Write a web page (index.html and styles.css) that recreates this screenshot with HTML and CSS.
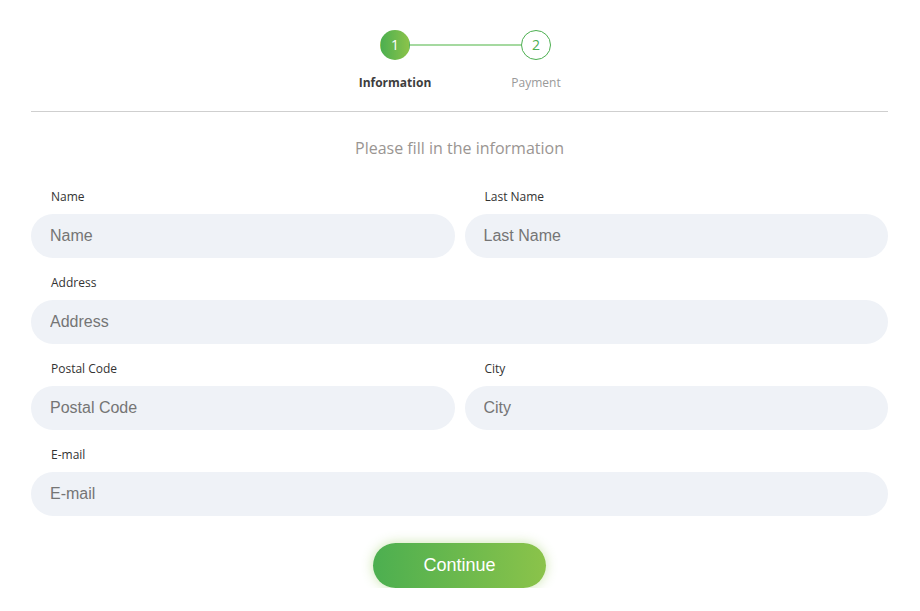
FILE: index.html
```html
<!DOCTYPE html>
<html lang="en">
<head>
<meta charset="utf-8">
<title>Checkout</title>
<link rel="stylesheet" href="styles.css">
</head>
<body>
<div class="page">
  <div class="stepper">
    <div class="step active">
      <div class="dot">1</div>
      <div class="step-label">Information</div>
    </div>
    <div class="step">
      <div class="dot">2</div>
      <div class="step-label">Payment</div>
    </div>
  </div>
  <hr class="divider">
  <h2 class="heading">Please fill in the information</h2>
  <form class="form">
    <div class="row two">
      <div class="field">
        <label class="label">Name</label>
        <input class="input" type="text" placeholder="Name">
      </div>
      <div class="field">
        <label class="label">Last Name</label>
        <input class="input" type="text" placeholder="Last Name">
      </div>
    </div>
    <div class="row">
      <div class="field">
        <label class="label">Address</label>
        <input class="input" type="text" placeholder="Address">
      </div>
    </div>
    <div class="row two">
      <div class="field">
        <label class="label">Postal Code</label>
        <input class="input" type="text" placeholder="Postal Code">
      </div>
      <div class="field">
        <label class="label">City</label>
        <input class="input" type="text" placeholder="City">
      </div>
    </div>
    <div class="row">
      <div class="field">
        <label class="label">E-mail</label>
        <input class="input" type="text" placeholder="E-mail">
      </div>
    </div>
    <div class="actions">
      <button class="btn" type="button">Continue</button>
    </div>
  </form>
</div>
</body>
</html>
```
FILE: styles.css
```css
* { box-sizing: border-box; }
html, body { margin: 0; padding: 0; background: #fff; }
body { font-family: "Open Sans", "Liberation Sans", sans-serif; color: #333; }

.page { padding: 30px 32px 0 31px; }

.stepper {
  display: flex;
  justify-content: center;
  margin-left: 12px;
}
.step {
  width: 141px;
  display: flex;
  flex-direction: column;
  align-items: center;
  position: relative;
}
.step:first-child::after {
  content: "";
  position: absolute;
  top: 15px;
  left: calc(50% + 15px);
  width: 111px;
  height: 2px;
  margin-top: -1px;
  background: #a5d9a0;
}
.dot {
  width: 30px;
  height: 30px;
  border-radius: 50%;
  border: 1px solid #4caf50;
  background: #fff;
  color: #4caf50;
  font-size: 14px;
  line-height: 28px;
  text-align: center;
}
.step.active .dot {
  border-color: transparent;
  background: linear-gradient(90deg, #4caf50, #8bc34a);
  color: #fff;
}
.step-label {
  margin-top: 15px;
  font-size: 12px;
  line-height: 16px;
  color: #999;
}
.step.active .step-label { color: #3d3d3d; font-weight: 700; }

.divider {
  margin: 20px 0 0;
  border: 0;
  border-top: 1px solid #cfcfcf;
  height: 0;
}

.heading {
  margin: 25px 0 0;
  text-align: center;
  font-weight: 400;
  font-size: 16px;
  line-height: 22px;
  color: #9a9592;
}

.form { margin-top: 30px; display: flex; flex-direction: column; gap: 17px; }
.row { display: grid; grid-template-columns: 1fr; gap: 10px; }
.row.two { grid-template-columns: 1fr 1fr; }
.field { display: flex; flex-direction: column; }
.label {
  font-size: 12px;
  line-height: 16px;
  color: #333;
  padding-left: 20px;
  margin-bottom: 9px;
}
.input {
  height: 44px;
  border: 0;
  border-radius: 22px;
  background: #eff2f7;
  padding: 0 19px;
  font-family: "Liberation Sans", Arial, sans-serif;
  font-size: 16px;
  color: #333;
  outline: none;
}
.input::placeholder { color: #757575; }

.actions { display: flex; justify-content: center; margin-top: 10px; }
.btn {
  width: 173px;
  height: 45px;
  border: 0;
  border-radius: 23px;
  background: linear-gradient(90deg, #4caf50, #8bc34a);
  color: #fff;
  font-family: "Liberation Sans", Arial, sans-serif;
  font-size: 18px;
  box-shadow: 0 0 12px rgba(139, 195, 74, 0.45);
  cursor: pointer;
}
```
